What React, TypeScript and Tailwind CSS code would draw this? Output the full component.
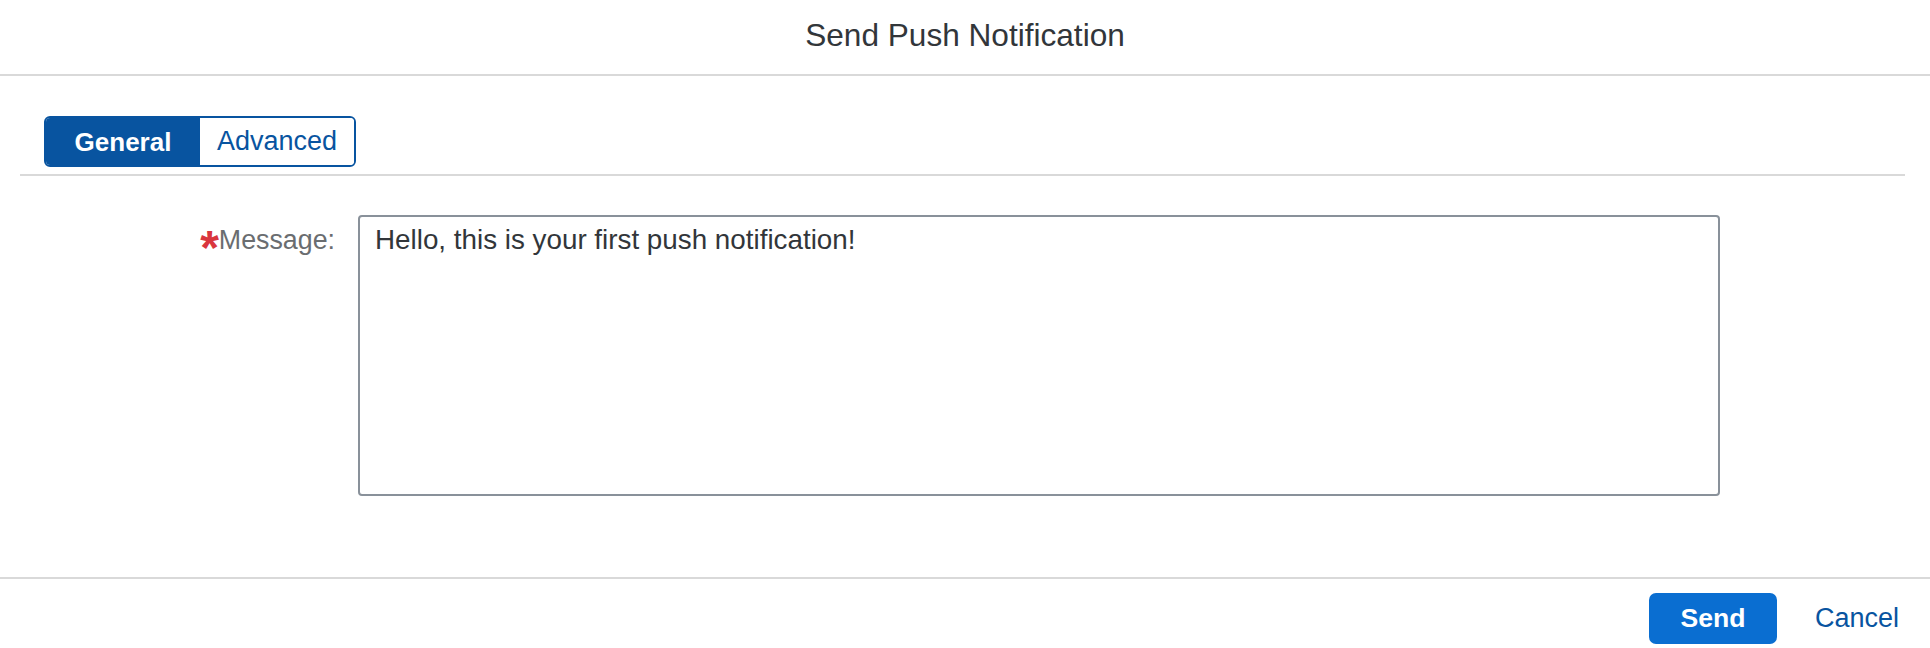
import { useState } from "react";

const tabs = ["General", "Advanced"];

export default function App() {
  const [active, setActive] = useState("General");

  return (
    <div className="flex h-[648px] w-full flex-col overflow-hidden bg-white font-['Liberation_Sans',Arial,sans-serif] text-[#32363a]">
      {/* dialog header */}
      <header className="h-[76px] shrink-0 border-b-2 border-[#d9d9d9] pt-[19px] text-center">
        <h1 className="text-[31.6px] leading-[32px] font-normal">Send Push Notification</h1>
      </header>

      {/* tab strip */}
      <div className="ml-[20px] mr-[25px] mt-[40px] border-b-2 border-[#d9d9d9] pb-[7px] pl-[24px]">
        <div className="flex h-[51px] w-[312px] overflow-hidden rounded-[6px] border-2 border-[#0854a0]">
          {tabs.map((t) => (
            <button
              key={t}
              onClick={() => setActive(t)}
              className={
                active === t
                  ? "flex-1 bg-[#0854a0] text-[26px] font-bold leading-none text-white"
                  : "flex-1 bg-white text-[27px] leading-none text-[#0854a0]"
              }
            >
              {t}
            </button>
          ))}
        </div>
      </div>

      {/* form */}
      <div className="mt-[39px] grid grid-cols-[335px_1362px] gap-x-[23px]">
        <label className="pt-[9px] text-right text-[26.8px] leading-[32px] text-[#6a6d70]">
          <span className="inline-block align-top text-[48px] leading-[48px] font-bold text-[#d9363e]">*</span>
          Message:
        </label>
        <textarea
          readOnly
          defaultValue="Hello, this is your first push notification!"
          className="h-[281px] resize-none rounded-[4px] border-2 border-[#89919a] px-[15px] pt-[7px] text-[27.8px] leading-[32px] text-[#32363a] outline-none"
        />
      </div>

      {/* footer */}
      <footer className="mt-auto flex h-[71px] shrink-0 items-start justify-end gap-[38px] border-t-2 border-[#d9d9d9] pr-[31px] pt-[14px]">
        <button className="h-[51px] w-[128px] rounded-[7px] bg-[#0a6ed1] text-[26.6px] font-bold text-white">
          Send
        </button>
        <button className="h-[51px] text-[27px] text-[#0854a0]">Cancel</button>
      </footer>
    </div>
  );
}
